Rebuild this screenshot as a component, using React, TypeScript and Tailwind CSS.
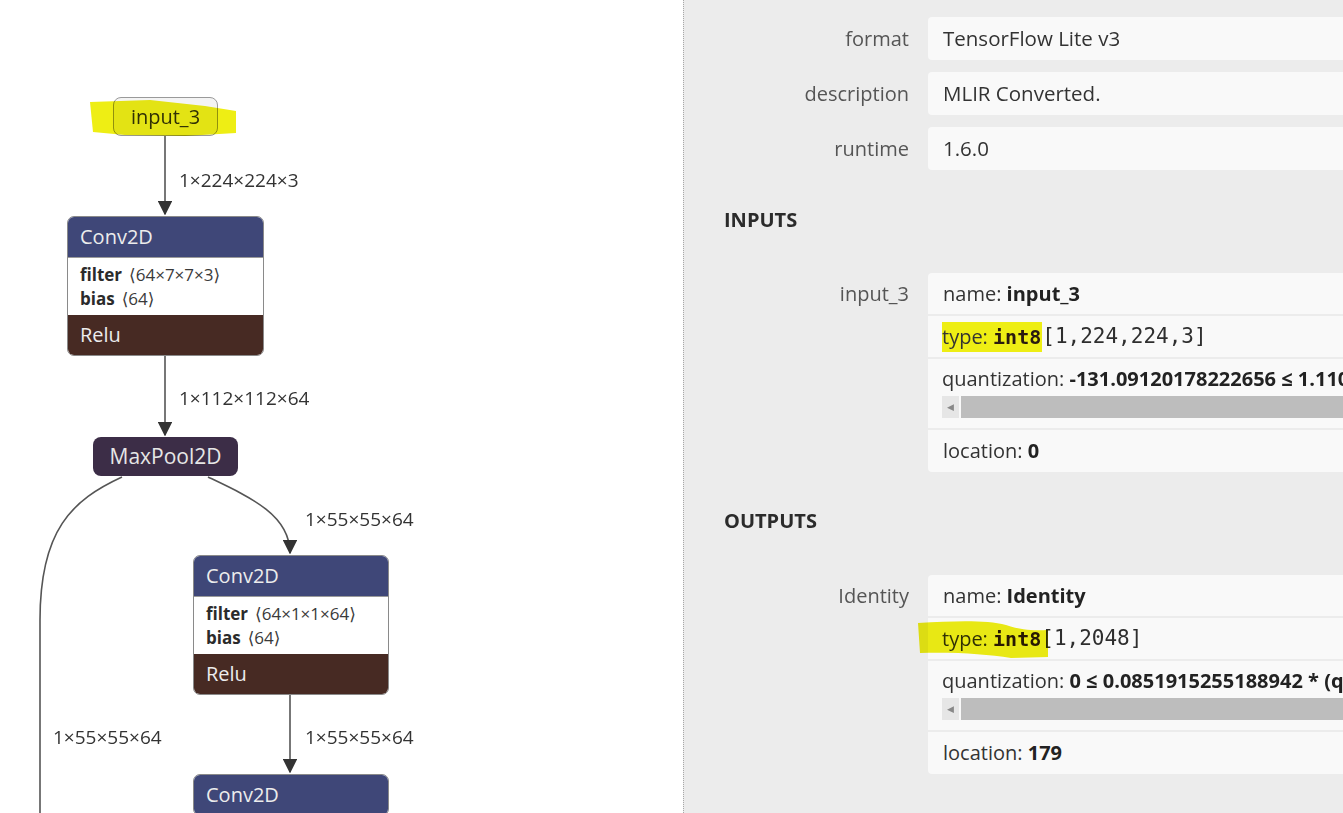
import React from 'react';

const sans = { fontFamily: '"Open Sans", "Noto Sans", "DejaVu Sans", sans-serif' };
const mono = { fontFamily: '"DejaVu Sans Mono", monospace' };

interface OpNodeProps {
  left: number;
  top: number;
  width: number;
  filter?: string;
  bias?: string;
  footer?: string;
}

// Conv2D style node: blue header, white attributes, brown activation
function OpNode({ left, top, width, filter, bias, footer }: OpNodeProps) {
  return (
    <div
      className="absolute rounded-[7px] border border-[#8a8a8a] overflow-hidden flex flex-col"
      style={{ left, top, width }}
    >
      <div className="h-[40px] bg-[#3f4778] text-[#ececec] text-[20px] pl-[12px] flex items-center">Conv2D</div>
      {filter && (
        <div className="h-[58px] bg-white border-t border-[#9a9a9a] pl-[12px] flex flex-col justify-center text-[17px] leading-[24px] text-[#3a3a3a]">
          <div>
            <span className="font-bold text-[#2b2b2b]">filter</span>
            <span className="ml-[7px]">⟨{filter}⟩</span>
          </div>
          <div>
            <span className="font-bold text-[#2b2b2b]">bias</span>
            <span className="ml-[7px]">⟨{bias}⟩</span>
          </div>
        </div>
      )}
      {footer && (
        <div className="h-[40px] bg-[#472a23] text-[#ececec] text-[20px] pl-[12px] flex items-center">{footer}</div>
      )}
    </div>
  );
}

function EdgeLabel({ left, top, text }: { left: number; top: number; text: string }) {
  return (
    <div className="absolute text-[19px] leading-[22px] text-[#333] whitespace-nowrap" style={{ left, top }}>
      {text}
    </div>
  );
}

function Graph() {
  return (
    <div className="relative w-[683px] h-[813px] shrink-0 bg-white overflow-hidden" style={sans}>
      <svg className="absolute inset-0" width="683" height="813" fill="none">
        <defs>
          <marker id="arrow" viewBox="0 0 10 10" refX="9" refY="5" markerWidth="9" markerHeight="9" orient="auto">
            <path d="M0 0L10 5L0 10z" fill="#333" />
          </marker>
        </defs>
        <g stroke="#555" strokeWidth="1.6">
          <path d="M165 136V214" markerEnd="url(#arrow)" />
          <path d="M165 355V435" markerEnd="url(#arrow)" />
          <path d="M208 477C250 497 290 515 290 553" markerEnd="url(#arrow)" />
          <path d="M122 477C72 500 40 530 40 620V813" />
          <path d="M290 694V772" markerEnd="url(#arrow)" />
        </g>
      </svg>

      {/* input node */}
      <div className="absolute left-[113px] top-[97px] w-[105px] h-[39px] rounded-[8px] border-[1.5px] border-[#9a9a9a] bg-[#f4f4f4] flex items-center justify-center text-[20px] text-[#333]">
        input_3
      </div>
      {/* marker highlight */}
      <svg className="absolute left-0 top-0 mix-blend-multiply" width="260" height="160">
        <path d="M90 102L150 100L205 106L236 111L236 133L185 136L125 135L93 132Z" fill="#eeee14" />
      </svg>

      <EdgeLabel left={179} top={169} text="1×224×224×3" />
      <OpNode left={67} top={216} width={197} filter="64×7×7×3" bias="64" footer="Relu" />
      <EdgeLabel left={179} top={387} text="1×112×112×64" />

      <div className="absolute left-[93px] top-[437px] w-[145px] h-[39px] rounded-[8px] bg-[#3c2d47] text-[#e6e6e6] text-[21px] flex items-center justify-center">
        MaxPool2D
      </div>

      <EdgeLabel left={305} top={508} text="1×55×55×64" />
      <OpNode left={193} top={555} width={196} filter="64×1×1×64" bias="64" footer="Relu" />
      <EdgeLabel left={53} top={726} text="1×55×55×64" />
      <EdgeLabel left={305} top={726} text="1×55×55×64" />
      <OpNode left={193} top={774} width={196} />
    </div>
  );
}

function PropRow({ label, value }: { label: string; value: string }) {
  return (
    <div className="flex">
      <div className="w-[244px] shrink-0 h-[43px] pr-[19px] flex items-center justify-end text-[20px] text-[#555]">{label}</div>
      <div className="w-[480px] shrink-0 h-[43px] rounded-[4px] bg-[#f9f9f9] px-[15px] flex items-center text-[20.5px] text-[#333]">
        {value}
      </div>
    </div>
  );
}

function Scrollbar() {
  return (
    <div className="flex h-[22px] mt-[5px]">
      <div className="w-[17px] bg-[#e6e6e6] flex items-center justify-center text-[9px] text-[#888]">◀</div>
      <div className="flex-1 ml-[2px] bg-[#bdbdbd]" />
    </div>
  );
}

interface ArgProps {
  label: string;
  name: string;
  dtype: React.ReactNode;
  shape: string;
  quant: string;
  location: string;
}

function Argument({ label, name, dtype, shape, quant, location }: ArgProps) {
  return (
    <div className="flex">
      <div className="w-[244px] shrink-0 h-[41px] pr-[19px] flex items-center justify-end text-[20px] text-[#555]">{label}</div>
      <div className="w-[480px] shrink-0 flex flex-col gap-[2px] text-[20px] text-[#333]">
        <div className="h-[41px] rounded-t-[4px] bg-[#f9f9f9] px-[15px] flex items-center whitespace-nowrap">
          name:&nbsp;<span className="font-bold text-[#222]">{name}</span>
        </div>
        <div className="h-[41px] bg-[#f9f9f9] px-[14px] flex items-center whitespace-nowrap">
          {dtype}
          <span className="text-[21px] text-[#2e2e2e]" style={mono}>
            {shape}
          </span>
        </div>
        <div className="h-[69px] bg-[#f9f9f9] px-[14px] pt-[8px] flex flex-col overflow-hidden">
          <div className="whitespace-nowrap leading-[24px]">
            quantization:&nbsp;<span className="font-bold text-[#222]">{quant}</span>
          </div>
          <Scrollbar />
        </div>
        <div className="h-[42px] rounded-b-[4px] bg-[#f9f9f9] px-[15px] flex items-center">
          location:&nbsp;<span className="font-bold text-[#222]">{location}</span>
        </div>
      </div>
    </div>
  );
}

export default function App() {
  return (
    <div className="flex w-[1343px] h-[813px] overflow-hidden" style={sans}>
      <Graph />
      <div className="flex-1 relative bg-[#ececec] border-l border-dotted border-[#a8a8a8] overflow-hidden pt-[17px] flex flex-col">
        <div className="flex flex-col gap-[12px]">
          <PropRow label="format" value="TensorFlow Lite v3" />
          <PropRow label="description" value="MLIR Converted." />
          <PropRow label="runtime" value="1.6.0" />
        </div>

        <div className="pl-[40px] mt-[36px] h-[28px] flex items-center text-[20px] font-bold text-[#2b2b2b]">INPUTS</div>
        <div className="mt-[39px]">
          <Argument
            label="input_3"
            name="input_3"
            dtype={
              <span className="bg-[#eeee14] pr-[1px]">
                type:&nbsp;<span className="font-bold text-[#2a1a10]" style={mono}>int8</span>
              </span>
            }
            shape="[1,224,224,3]"
            quant="-131.09120178222656 ≤ 1.1102230246251565 * (q - 0) ≤ 150.1306915283203"
            location="0"
          />
        </div>

        <div className="pl-[40px] mt-[35px] h-[28px] flex items-center text-[20px] font-bold text-[#2b2b2b]">OUTPUTS</div>
        <div className="mt-[40px] relative">
          <Argument
            label="Identity"
            name="Identity"
            dtype={
              <span>
                type:&nbsp;<span className="font-bold text-[#2a1a10]" style={mono}>int8</span>
              </span>
            }
            shape="[1,2048]"
            quant="0 ≤ 0.0851915255188942 * (q + 128) ≤ 21.72383975982666"
            location="179"
          />
          {/* marker highlight over the type row */}
          <svg className="absolute left-[232px] top-[45px] mix-blend-multiply" width="140" height="40">
            <path d="M2 3C40 1 70 0 90 5C110 12 125 10 132 10L132 37L95 38C70 34 40 32 4 33Z" fill="#eeee14" />
          </svg>
        </div>
      </div>
    </div>
  );
}
